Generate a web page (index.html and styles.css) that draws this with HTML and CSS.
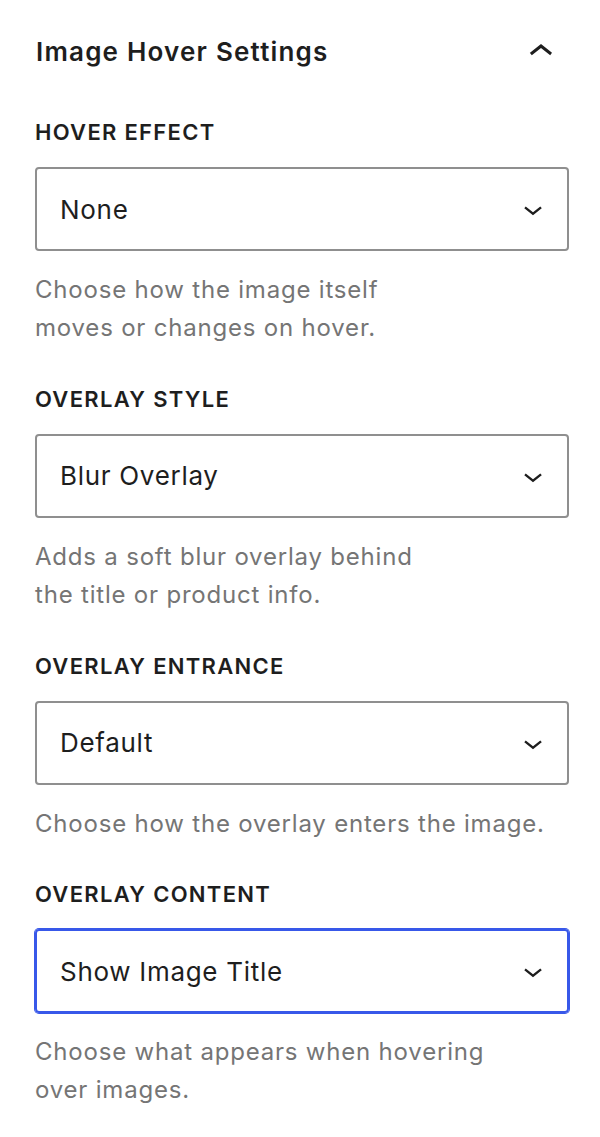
FILE: index.html
```html
<!DOCTYPE html>
<html lang="en">
<head>
  <meta charset="UTF-8">
  <meta name="viewport" content="width=device-width, initial-scale=1.0">
  <title>Image Hover Settings</title>
  <link rel="stylesheet" href="styles.css">
</head>
<body>
  <div class="panel">
    <div class="panel-head">
      <h2>Image Hover Settings</h2>
      <svg class="toggle" viewBox="0 0 24 24" width="48" height="48">
        <path d="M6.5 12.4L12 8l5.5 4.4-.9 1.2L12 10l-4.6 3.6-1-1.2z"/>
      </svg>
    </div>

    <div class="field">
      <label>Hover Effect</label>
      <div class="select">
        <span>None</span>
        <svg viewBox="0 0 24 24" width="38" height="38"><path d="M17.5 11.6L12 16l-5.5-4.4.9-1.2L12 14l4.6-3.6 1 1.2z"/></svg>
      </div>
      <p class="help">Choose how the image itself<br>moves or changes on hover.</p>
    </div>

    <div class="field">
      <label>Overlay Style</label>
      <div class="select">
        <span>Blur Overlay</span>
        <svg viewBox="0 0 24 24" width="38" height="38"><path d="M17.5 11.6L12 16l-5.5-4.4.9-1.2L12 14l4.6-3.6 1 1.2z"/></svg>
      </div>
      <p class="help">Adds a soft blur overlay behind<br>the title or product info.</p>
    </div>

    <div class="field">
      <label>Overlay Entrance</label>
      <div class="select">
        <span>Default</span>
        <svg viewBox="0 0 24 24" width="38" height="38"><path d="M17.5 11.6L12 16l-5.5-4.4.9-1.2L12 14l4.6-3.6 1 1.2z"/></svg>
      </div>
      <p class="help">Choose how the overlay enters the image.</p>
    </div>

    <div class="field">
      <label>Overlay Content</label>
      <div class="select is-focused">
        <span>Show Image Title</span>
        <svg viewBox="0 0 24 24" width="38" height="38"><path d="M17.5 11.6L12 16l-5.5-4.4.9-1.2L12 14l4.6-3.6 1 1.2z"/></svg>
      </div>
      <p class="help">Choose what appears when hovering<br>over images.</p>
    </div>
  </div>
</body>
</html>
```

FILE: styles.css
```css
* {
  margin: 0; padding: 0; box-sizing: border-box;
}
body {
  background: #fff;
  font-family: Inter, "Noto Sans", sans-serif;
  color: #1e1e1e;
}
.panel {
  padding: 28px 31px 0 35px;
}
.panel-head {
  display: flex;
  align-items: center;
  justify-content: space-between;
  margin-bottom: 42px;
}
.panel-head h2 {
  font-size: 26px; line-height: 32px;
  font-weight: 600;
  letter-spacing: 1.2px;
  padding-left: 1px;
}
.toggle {
  margin-right: 4px;
  fill: #1e1e1e;
}
.field {
  margin-bottom: 37px;
}
.field label {
  display: block;
  font-size: 22px; line-height: 28px;
  font-weight: 600;
  letter-spacing: 1.3px;
  text-transform: uppercase;
  margin-bottom: 21px;
}
.select {
  height: 84px;
  border: 2px solid #8f8f8f;
  border-radius: 4px;
  display: flex;
  align-items: center;
  justify-content: space-between;
  padding: 0 15px 0 23px;
  font-size: 26px;
  letter-spacing: 0.7px;
}
.select svg {
  fill: #1e1e1e;
}
.select.is-focused {
  border-color: #3858e9;
  box-shadow: 0 0 0 1px #3858e9;
}
.help {
  margin-top: 20px;
  font-size: 24px; line-height: 38.4px;
  letter-spacing: 0.8px;
  color: #757575;
}
```
